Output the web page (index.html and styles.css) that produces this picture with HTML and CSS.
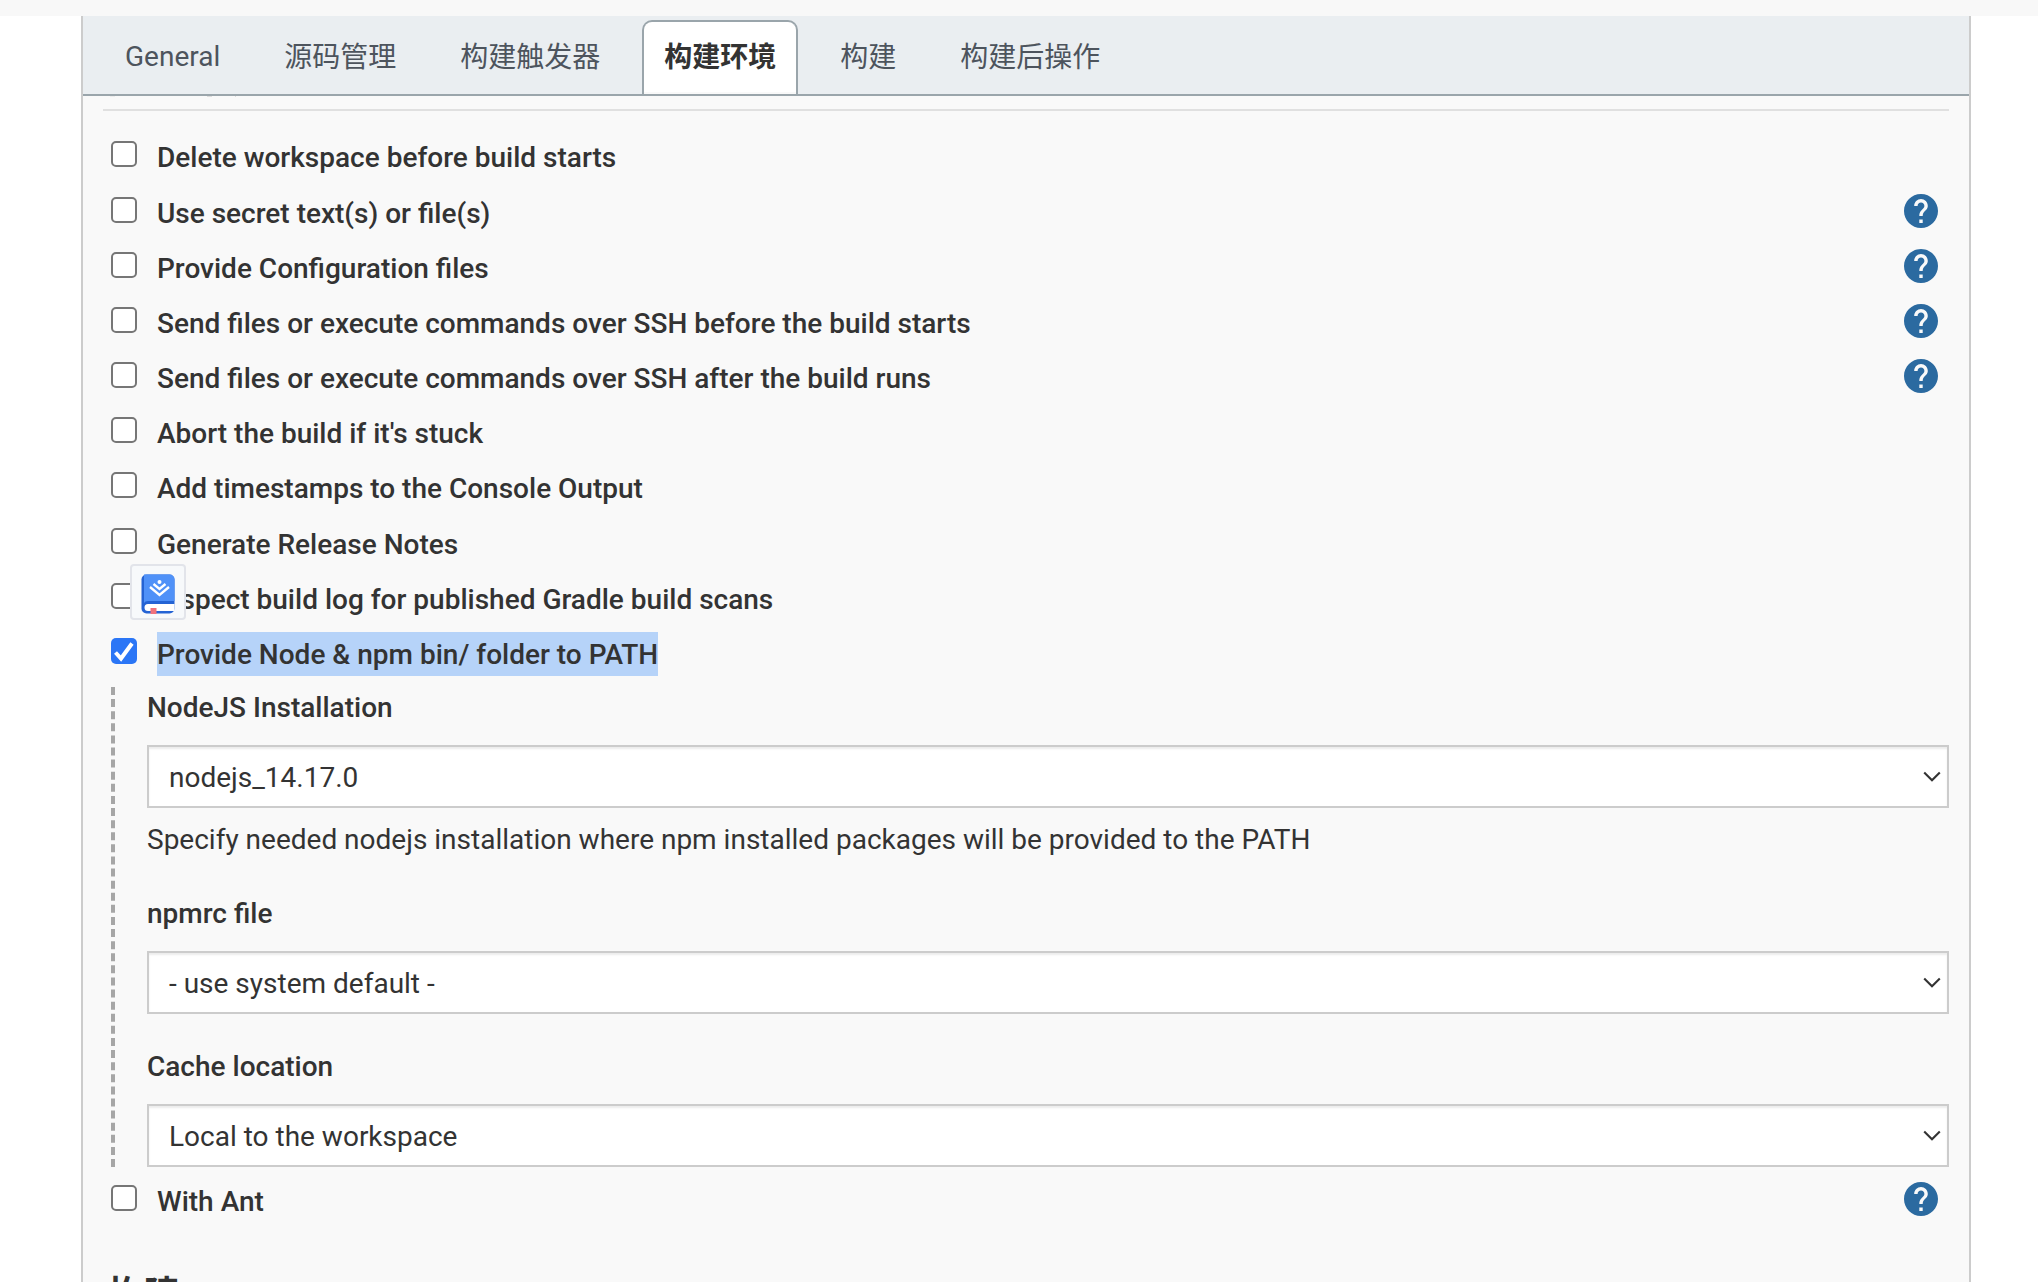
FILE: index.html
```html
<!DOCTYPE html>
<html lang="zh-CN">
<head>
<meta charset="utf-8">
<title>构建环境</title>
<link rel="stylesheet" href="styles.css">
</head>
<body>
<svg class="defs" aria-hidden="true">
  <symbol id="help" viewBox="2 2 20 20"><path d="M12 2C6.48 2 2 6.48 2 12s4.48 10 10 10 10-4.48 10-10S17.52 2 12 2zm1 17h-2v-2h2v2zm2.07-7.75l-.9.92C13.45 12.9 13 13.5 13 15h-2v-.5c0-1.1.45-2.1 1.17-2.83l1.24-1.26c.37-.36.59-.86.59-1.41 0-1.1-.9-2-2-2s-2 .9-2 2H8c0-2.21 1.79-4 4-4s4 1.79 4 4c0 .88-.36 1.68-.93 2.25z"/></symbol>
  <symbol id="chevron" viewBox="0 0 18 12"><path d="M1.2 1.5 9 9.3l7.800-7.800" fill="none" stroke="#333" stroke-width="2.100"/></symbol>
</svg>
<div class="topband"></div>
<main class="panel">
  <nav class="tabs">
    <a class="tab latin">General</a>
    <a class="tab">源码管理</a>
    <a class="tab">构建触发器</a>
    <a class="tab active">构建环境</a>
    <a class="tab">构建</a>
    <a class="tab">构建后操作</a>
  </nav>
  <div class="content">
    <svg class="remnant" viewBox="0 0 140 1"><path d="M7 0h5v1H7z" opacity=".4"/><path d="M104 0h5v1h-5zM132 0h1v1h-1z"/></svg>
    <div class="rule"></div>
    <div class="row tall"><span class="box"></span><span class="label">Delete workspace before build starts</span></div>
    <div class="row"><span class="box"></span><span class="label">Use secret text(s) or file(s)</span><svg class="help"><use href="#help"/></svg></div>
    <div class="row"><span class="box"></span><span class="label">Provide Configuration files</span><svg class="help"><use href="#help"/></svg></div>
    <div class="row"><span class="box"></span><span class="label">Send files or execute commands over SSH before the build starts</span><svg class="help"><use href="#help"/></svg></div>
    <div class="row"><span class="box"></span><span class="label">Send files or execute commands over SSH after the build runs</span><svg class="help"><use href="#help"/></svg></div>
    <div class="row"><span class="box"></span><span class="label">Abort the build if it's stuck</span></div>
    <div class="row tall"><span class="box"></span><span class="label">Add timestamps to the Console Output</span></div>
    <div class="row"><span class="box"></span><span class="label">Generate Release Notes</span></div>
    <div class="row"><span class="box"></span><span class="label">Inspect build log for published Gradle build scans</span>
      <div class="popup">
        <svg viewBox="0 0 34 40">
          <rect x="0.500" y="0.500" width="33" height="39" rx="5" fill="#2463d4"/>
          <path d="M3 0.500h25.500a5 5 0 0 1 5 5V27H7q-3 0-4 2z" fill="#4f91f8"/>
          <path d="M33.500 30H7a3.500 3.500 0 0 0 0 7h26.500z" fill="#fff"/>
          <path d="M9.500 34h6v6h-6z" fill="#f0727c"/>
          <path d="m9 13 9.500 8 9.500-8M12.500 10l6 5 6-5" fill="none" stroke="#fff" stroke-width="2.300"/>
          <circle cx="18.500" cy="8" r="2" fill="#fff"/>
        </svg>
      </div>
    </div>
    <div class="row"><span class="box checked"><svg viewBox="0 0 26 26"><path d="m4.500 14.500 5.500 6L21 5.500" fill="none" stroke="#fff" stroke-width="4"/></svg></span><span class="label selected">Provide Node &amp; npm bin/ folder to PATH</span></div>
    <section class="nested">
      <div class="field">
        <div class="title">NodeJS Installation</div>
        <div class="select"><span>nodejs_14.17.0</span><svg><use href="#chevron"/></svg></div>
        <div class="desc">Specify needed nodejs installation where npm installed packages will be provided to the PATH</div>
      </div>
      <div class="field">
        <div class="title">npmrc file</div>
        <div class="select"><span>- use system default -</span><svg><use href="#chevron"/></svg></div>
      </div>
      <div class="field">
        <div class="title">Cache location</div>
        <div class="select"><span>Local to the workspace</span><svg><use href="#chevron"/></svg></div>
      </div>
    </section>
    <div class="row"><span class="box"></span><span class="label">With Ant</span><svg class="help"><use href="#help"/></svg></div>
    <h2 class="heading">构建</h2>
  </div>
</main>
</body>
</html>
```
FILE: styles.css
```css
* { box-sizing: border-box; }
body {
  margin: 0;
  height: 1282px;
  overflow: hidden;
  background: #fff;
  color: #333;
  font: 28px/40px Roboto, "Noto Sans CJK SC", sans-serif;
}
.defs { display: none; }
.topband { height: 16px; background: #f8f8f8; }
.panel {
  width: 1890px;
  height: 1266px;
  margin-left: 81px;
  overflow: hidden;
  border: solid #ccc;
  border-width: 0 2px;
  background: #f9f9f9;
}
.tabs {
  display: flex;
  gap: 20px;
  height: 80px;
  padding: 4px 20px 0;
  background: #eaeef1;
  border-bottom: 2px solid #9aa5ab;
}
.tab {
  height: 74px;
  padding: 0 20px;
  border: 2px solid transparent;
  border-bottom: 0;
  border-radius: 10px 10px 0 0;
  color: #4d545d;
  line-height: 71px;
  white-space: nowrap;
}
.tab.latin { line-height: 69px; }
.tab.active {
  background: linear-gradient(#fff 70px, #f9f9f9 70px);
  border-color: #9aa5ab;
  color: #333;
  font-weight: 700;
}
.content { padding: 0 20px; }
.remnant { display: block; width: 140px; height: 1px; fill: #ddd; }
.rule { height: 2px; margin: 12px 0 24px; background: #e0e0e0; }
.row {
  position: relative;
  display: flex;
  align-items: flex-start;
  height: 55px;
  padding: 0 11px 0 8px;
}
.row.tall { height: 56px; }
.box {
  width: 26px;
  height: 26px;
  margin: 6px 20px 0 0;
  border: 2px solid #767676;
  border-radius: 5px;
  background: #fff;
}
.box.checked { border: 0; background: #2b76f6; }
.box svg { display: block; width: 26px; height: 26px; }
.label { padding-top: 2px; font-weight: 500; line-height: 42px; white-space: nowrap; }
.label.selected { background: #b6d3f9; }
.help { width: 34px; height: 34px; margin: 3px 0 0 auto; fill: #2b6aa0; }
.popup {
  position: absolute;
  left: 27px;
  top: -13px;
  width: 56px;
  height: 56px;
  padding: 8px 9px;
  border: 2px solid #e2e4ea;
  border-radius: 4px;
  background: #f7f9fb;
}
.popup svg { display: block; width: 34px; height: 40px; }
.nested {
  display: flex;
  flex-direction: column;
  height: 480px;
  margin: 0 0 12px 8px;
  padding-left: 32px;
  border-left: 4px dashed #a6a6a6;
}
.title { margin-bottom: 16px; font-weight: 500; line-height: 42px; }
.field { margin-bottom: 32px; }
.field:first-child { margin-bottom: 33px; }
.select {
  display: flex;
  align-items: center;
  justify-content: space-between;
  height: 63px;
  padding: 0 6px 0 20px;
  border: 2px solid #ccc;
  background: #fff;
  box-shadow: inset 0 2px 2px rgba(0, 0, 0, 0.075);
}
.select span { padding-top: 2px; }
.select svg { width: 18px; height: 12px; }
.desc { margin-top: 12px; }
.heading { margin: 37px 0 0 4px; font-size: 37px; line-height: 50px; font-weight: 700; }
```
